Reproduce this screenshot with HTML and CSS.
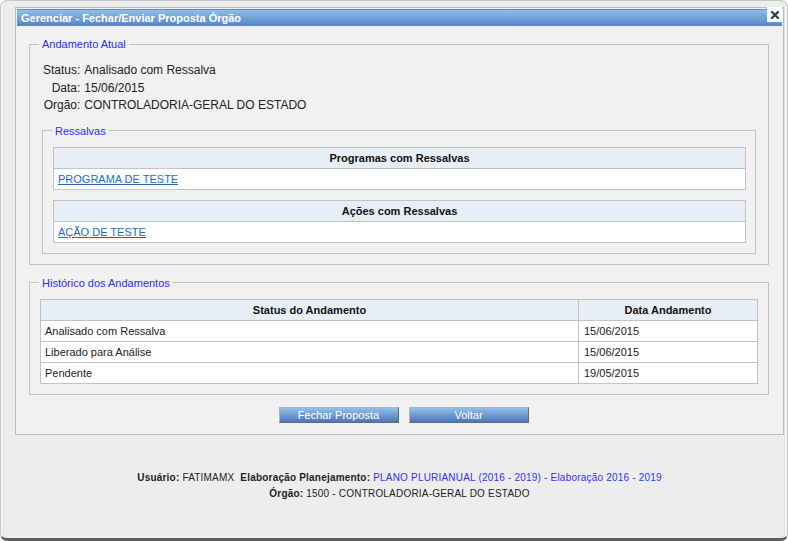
FILE: index.html
```html
<!DOCTYPE html>
<html lang="pt-BR">
<head>
<meta charset="utf-8">
<title>Gerenciar - Fechar/Enviar Proposta Órgão</title>
<link rel="stylesheet" href="styles.css">
</head>
<body>
<div class="window">
  <div class="dialog">
    <div class="titlebar">Gerenciar - Fechar/Enviar Proposta Órgão</div>
    <button class="close" type="button" aria-label="Fechar">
      <svg width="8" height="8" viewBox="0 0 8 8"><path d="M1 1 L7 7 M7 1 L1 7" stroke="#2b3c56" stroke-width="2.2" stroke-linecap="square" fill="none"/></svg>
    </button>
    <div class="dialog-body">
      <fieldset class="fs fs-main">
        <legend class="lg lg-main">Andamento Atual</legend>
        <div class="info">
          <span class="lbl">Status:</span><span>Analisado com Ressalva</span>
          <span class="lbl">Data:</span><span>15/06/2015</span>
          <span class="lbl">Orgão:</span><span>CONTROLADORIA-GERAL DO ESTADO</span>
        </div>
        <fieldset class="fs fs-inner">
          <legend class="lg lg-inner">Ressalvas</legend>
          <div class="gtable">
            <div class="gh">Programas com Ressalvas</div>
            <div class="gc"><a href="#">PROGRAMA DE TESTE</a></div>
          </div>
          <div class="gtable gtable-2">
            <div class="gh">Ações com Ressalvas</div>
            <div class="gc"><a href="#">AÇÃO DE TESTE</a></div>
          </div>
        </fieldset>
      </fieldset>
      <fieldset class="fs fs-hist">
        <legend class="lg lg-hist">Histórico dos Andamentos</legend>
        <div class="htable">
          <div class="gh">Status do Andamento</div>
          <div class="gh">Data Andamento</div>
          <div class="gc">Analisado com Ressalva</div>
          <div class="gc gc-date">15/06/2015</div>
          <div class="gc">Liberado para Análise</div>
          <div class="gc gc-date">15/06/2015</div>
          <div class="gc">Pendente</div>
          <div class="gc gc-date">19/05/2015</div>
        </div>
      </fieldset>
      <div class="actions">
        <button class="btn" type="button">Fechar Proposta</button>
        <button class="btn" type="button">Voltar</button>
      </div>
    </div>
  </div>
  <div class="footer">
    <div><b>Usuário:</b> FATIMAMX &nbsp;<b>Elaboração Planejamento:</b> <span class="blue">PLANO PLURIANUAL (2016 - 2019) - Elaboração 2016 - 2019</span></div>
    <div><b>Órgão:</b> 1500 - CONTROLADORIA-GERAL DO ESTADO</div>
  </div>
</div>
</body>
</html>
```

FILE: styles.css
```css
html, body {
  margin: 0;
  padding: 0;
  background: #ffffff;
}

body {
  font-family: "Liberation Sans", Arial, sans-serif;
  color: #222222;
}

.window {
  box-sizing: border-box;
  width: 788px;
  height: 541px;
  border: 1px solid #c6c6c6;
  border-bottom: 3px solid #5e5e5e;
  border-radius: 7px;
  background: #ededed;
  padding: 6px 0 0 14px;
  box-shadow: inset 2px 0 0 #f6f6f6, inset 3px 0 0 #dedede, inset -2px 0 0 #f6f6f6, inset -3px 0 0 #dedede;
}

.dialog {
  position: relative;
  box-sizing: border-box;
  width: 769px;
  border: 1px solid #bdbdbd;
  padding: 1px;
  background: #f1f1f1;
}

.titlebar {
  height: 17px;
  line-height: 17px;
  padding-left: 4px;
  background: linear-gradient(#8fbde9, #5784c4);
  border-top: 1px solid #5f8ac4;
  box-sizing: border-box;
  color: #ffffff;
  font-size: 11px;
  font-weight: bold;
  white-space: nowrap;
}

.close {
  position: absolute;
  top: -1px;
  right: 1px;
  width: 15px;
  height: 15px;
  padding: 0;
  border: 0;
  background: #ffffff;
  display: flex;
  align-items: center;
  justify-content: center;
}

.close svg {
  display: block;
}

.dialog-body {
  padding: 0 13px 10px 12px;
}

.fs {
  margin: 0;
  min-width: 0;
  border: 1px solid #c2c2c2;
}

.lg {
  padding: 0 3px;
  font-size: 11px;
  line-height: 14px;
  color: #2d2dff;
}

.fs-main {
  margin-top: 11px;
  padding: 0 12px 10px 12px;
}

.lg-main {
  margin-left: -3px;
}

.info {
  display: grid;
  grid-template-columns: auto 1fr;
  column-gap: 4px;
  padding-top: 11px;
  margin-left: 1px;
  font-size: 12px;
  line-height: 17.5px;
  color: #222222;
}

.info .lbl {
  text-align: right;
}

.fs-inner {
  margin-top: 9px;
  padding: 0 9px 10px 10px;
}

.lg-inner {
  margin-left: -1px;
}

.gtable {
  margin-top: 9px;
  display: grid;
  grid-template-columns: 1fr;
  gap: 1px;
  border: 1px solid #c2c2c2;
  background: #c2c2c2;
}

.gtable-2 {
  margin-top: 10px;
}

.gh {
  height: 20px;
  line-height: 20px;
  background: #e8eef6;
  text-align: center;
  font-size: 11px;
  font-weight: bold;
  color: #111111;
}

.gc {
  height: 20px;
  line-height: 20px;
  background: #ffffff;
  padding-left: 4px;
  font-size: 11px;
  color: #222222;
}

.gc a {
  color: #1a6cc8;
  text-decoration: underline;
}

.fs-hist {
  margin-top: 11px;
  padding: 0 10px 10px 10px;
}

.lg-hist {
  margin-left: -1px;
}

.htable {
  margin-top: 9px;
  display: grid;
  grid-template-columns: 537px 1fr;
  gap: 1px;
  border: 1px solid #c2c2c2;
  background: #c2c2c2;
}

.gc-date {
  padding-left: 5px;
}

.actions {
  display: flex;
  justify-content: center;
  gap: 10px;
  margin-top: 12px;
  padding-left: 9px;
}

.btn {
  box-sizing: border-box;
  width: 120px;
  height: 16px;
  padding: 0;
  border: 1px solid;
  border-color: #b4b4b4 #6a6a6a #6a6a6a #b4b4b4;
  background: linear-gradient(#93bfe9, #4c76b7);
  color: #ffffff;
  font-family: "Liberation Sans", Arial, sans-serif;
  font-size: 11px;
  line-height: 14px;
}

.footer {
  width: 769px;
  margin-top: 35px;
  text-align: center;
  font-size: 10px;
  letter-spacing: 0.2px;
  line-height: 16px;
  color: #222222;
}

.footer .blue {
  color: #3232ff;
}
```
